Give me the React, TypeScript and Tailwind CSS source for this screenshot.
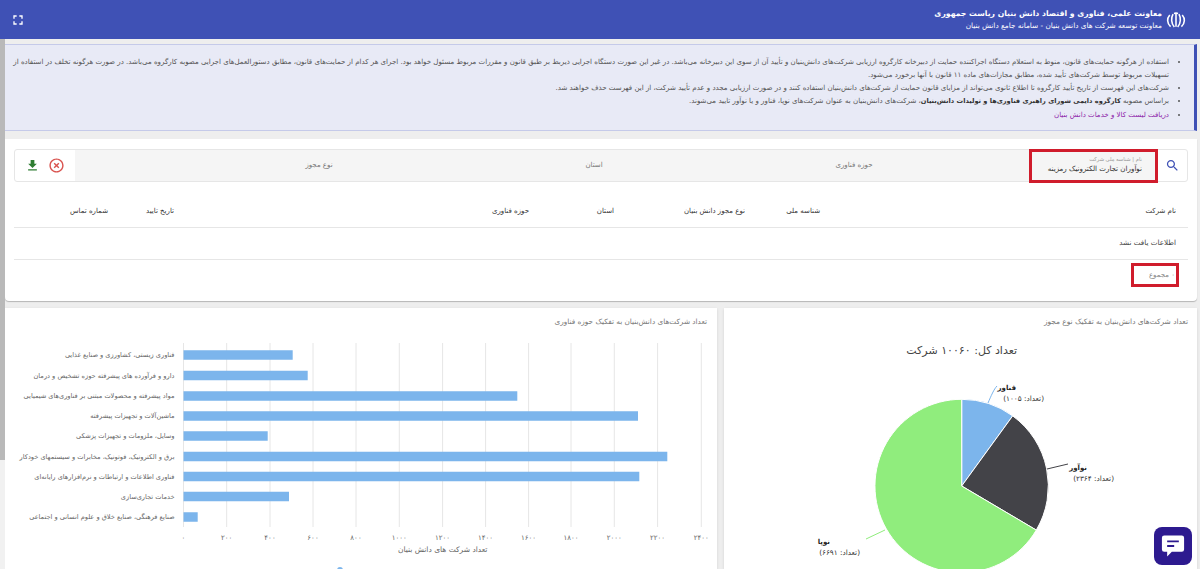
const bars = [
  { label: "فناوری زیستی، کشاورزی و صنایع غذایی", y: 355, end: 292.7 },
  { label: "دارو و فرآورده های پیشرفته حوزه تشخیص و درمان", y: 375.5, end: 307.7 },
  { label: "مواد پیشرفته و محصولات مبتنی بر فناوری‌های شیمیایی", y: 396, end: 517.3 },
  { label: "ماشین‌آلات و تجهیزات پیشرفته", y: 416, end: 638 },
  { label: "وسایل، ملزومات و تجهیزات پزشکی", y: 436, end: 267.7 },
  { label: "برق و الکترونیک، فوتونیک، مخابرات و سیستمهای خودکار", y: 456.5, end: 667.3 },
  { label: "فناوری اطلاعات و ارتباطات و نرم‌افزارهای رایانه‌ای", y: 476.5, end: 639.3 },
  { label: "خدمات تجاری‌سازی", y: 496.5, end: 289 },
  { label: "صنایع فرهنگی، صنایع خلاق و علوم انسانی و اجتماعی", y: 517, end: 197.7 },
];

const ticks = [
  { label: "۰", x: 183.5 },
  { label: "۲۰۰", x: 226.7 },
  { label: "۴۰۰", x: 270 },
  { label: "۶۰۰", x: 313 },
  { label: "۸۰۰", x: 356 },
  { label: "۱۰۰۰", x: 399.3 },
  { label: "۱۲۰۰", x: 442.6 },
  { label: "۱۴۰۰", x: 485.6 },
  { label: "۱۶۰۰", x: 528.6 },
  { label: "۱۸۰۰", x: 571 },
  { label: "۲۰۰۰", x: 614.3 },
  { label: "۲۲۰۰", x: 657.6 },
  { label: "۲۴۰۰", x: 701.3 },
];

const columns = ["نام شرکت", "شناسه ملی", "نوع مجوز دانش بنیان", "استان", "حوزه فناوری", "تاریخ تایید", "شماره تماس"];

function BarChart() {
  return (
    <svg viewBox="5 336 712 233" className="block h-[233px] w-[712px]" dir="rtl">
      {ticks.map((t) => (
        <g key={t.x}>
          <line x1={t.x} x2={t.x} y1={343} y2={527} stroke="#e6e6e6" strokeWidth={1} />
          <text x={t.x} y={539.5} textAnchor="middle" fontSize={7} fill="#666666">
            {t.label}
          </text>
        </g>
      ))}
      {bars.map((b) => (
        <g key={b.y}>
          <rect x={183.5} y={b.y - 4.75} width={b.end - 183.5} height={9.5} fill="#7cb5ec" />
          <text x={174.5} y={b.y + 2} textAnchor="start" fontSize={6.6} fill="#666666">
            {b.label}
          </text>
        </g>
      ))}
      <text x={442.7} y={552} textAnchor="middle" fontSize={7.5} fill="#666666">
        تعداد شرکت های دانش بنیان
      </text>
      <circle cx={340} cy={570} r={3} fill="#7cb5ec" />
    </svg>
  );
}

function PieChart() {
  return (
    <svg viewBox="724 336 473 233" className="block h-[233px] w-[473px]" dir="rtl">
      <text x={961.7} y={354} textAnchor="middle" fontSize={11} fill="#444444">
        تعداد کل: ۱۰۰۶۰ شرکت
      </text>
      <path d="M961.7 486 L961.7 399.3 A86.7 86.7 0 0 1 1012.7 415.9 Z" fill="#7cb5ec" stroke="#ffffff" />
      <path d="M961.7 486 L1012.7 415.9 A86.7 86.7 0 0 1 1036.3 530.1 Z" fill="#434348" stroke="#ffffff" />
      <path d="M961.7 486 L1036.3 530.1 A86.7 86.7 0 1 1 961.7 399.3 Z" fill="#90ed7d" stroke="#ffffff" />
      <path d="M988 403 C991 396 994 389 997 386" fill="none" stroke="#7cb5ec" />
      <path d="M1047 469 L1068 464" fill="none" stroke="#434348" />
      <path d="M885 530 L866 539" fill="none" stroke="#90ed7d" />
      <text x={1016} y={390} fontSize={7} fontWeight={700} fill="#222222">فناور</text>
      <text x={1044} y={400.5} fontSize={7.3} fill="#333333">(تعداد: ۱۰۰۵)</text>
      <text x={1087} y={470} fontSize={7} fontWeight={700} fill="#222222">نوآور</text>
      <text x={1114} y={480.5} fontSize={7.3} fill="#333333">(تعداد: ۲۳۶۴)</text>
      <text x={830} y={544} fontSize={7} fontWeight={700} fill="#222222">نوپا</text>
      <text x={860} y={554.5} fontSize={7.3} fill="#333333">(تعداد: ۶۶۹۱)</text>
    </svg>
  );
}

export default function App() {
  return (
    <div dir="rtl" className="relative h-[569px] w-[1200px] overflow-hidden bg-[#eeeeee] font-['DejaVu_Sans',sans-serif] text-[#444444]">
      {/* Header */}
      <header className="flex h-[39px] items-center justify-between bg-[#3f51b5] pl-[10px] pr-[14px] text-white">
        <div className="flex items-center gap-[4px]">
          <svg viewBox="0 0 24 24" className="h-[20px] w-[20px]" fill="none" stroke="#ffffff" strokeWidth={1.9}>
            <path d="M12 3 V20" />
            <path d="M9.5 4 H14.5" />
            <path d="M8.5 5 C6 9 6 16 10 20.5" />
            <path d="M15.5 5 C18 9 18 16 14 20.5" />
            <path d="M4.5 6 C1 10 1 16 5.5 20" />
            <path d="M19.5 6 C23 10 23 16 18.5 20" />
          </svg>
          <div>
            <div className="text-[7.7px] font-bold leading-[12px]">معاونت علمی، فناوری و اقتصاد دانش بنیان ریاست جمهوری</div>
            <div className="text-[7.3px] leading-[11px]">معاونت توسعه شرکت های دانش بنیان - سامانه جامع دانش بنیان</div>
          </div>
        </div>
        <svg viewBox="0 0 24 24" className="h-[16px] w-[16px]" fill="#ffffff">
          <path d="M7 14H5v5h5v-2H7v-3zm-2-4h2V7h3V5H5v5zm12 7h-3v2h5v-5h-2v3zM14 5v2h3v3h2V5h-5z" />
        </svg>
      </header>

      <div className="flex h-[530px]">
        <main className="w-[1195px] pr-[3px] pt-[5px]">
          {/* Notice */}
          <section className="h-[87px] border-y border-[#c5cae9] border-r-[3px] border-r-[#3f51b5] bg-[#e8eaf6] pl-[4px] pr-[14px] pt-[10px] text-[7.05px] leading-[13px] text-[#555555]">
            <ul className="list-disc pr-[11px]">
              <li>
                استفاده از هرگونه حمایت‌های قانون، منوط به استعلام دستگاه اجراکننده حمایت از دبیرخانه کارگروه ارزیابی شرکت‌های دانش‌بنیان و تأیید آن از سوی این دبیرخانه می‌باشد. در غیر این صورت دستگاه اجرایی ذیربط بر طبق قانون و مقررات مربوط مسئول خواهد بود. اجرای هر کدام از حمایت‌های قانون، مطابق دستورالعمل‌های اجرایی مصوبه کارگروه می‌باشد. در صورت هرگونه تخلف در استفاده از
                <br />
                تسهیلات مربوط توسط شرکت‌های تأیید شده، مطابق مجازات‌های ماده ۱۱ قانون با آنها برخورد می‌شود.
              </li>
              <li>
                شرکت‌های این فهرست از تاریخ تأیید کارگروه تا اطلاع ثانوی می‌تواند از مزایای قانون حمایت از شرکت‌های دانش‌بنیان استفاده کنند و در صورت ارزیابی مجدد و عدم تأیید شرکت، از این فهرست حذف خواهند شد.
              </li>
              <li>
                براساس مصوبه <b className="text-[6.6px] text-[#333333]">کارگروه دایمی شورای راهبری فناوری‌ها و تولیدات دانش‌بنیان</b>، شرکت‌های دانش‌بنیان به عنوان شرکت‌های نوپا، فناور و یا نوآور تایید می‌شوند.
              </li>
              <li>
                <a className="text-[#8e24aa]">دریافت لیست کالا و خدمات دانش بنیان</a>
              </li>
            </ul>
          </section>

          {/* Search and table */}
          <section className="mt-[8px] h-[162px] rounded-b-sm bg-white px-[9px] pt-[10px] shadow-[0_1px_1px_#b5b5b5]">
            <div className="flex h-[33px] items-stretch rounded-[3px] border border-[#e6e6e6]">
              <div className="flex w-[29px] items-center justify-center">
                <svg viewBox="0 0 24 24" className="h-[15px] w-[15px]" fill="#3f51b5">
                  <path d="M15.5 14h-.79l-.28-.27C15.41 12.59 16 11.11 16 9.5 16 5.91 13.09 3 9.5 3S3 5.91 3 9.5 5.91 16 9.5 16c1.61 0 3.09-.59 4.23-1.57l.27.28v.79l5 4.99L20.49 19l-4.99-5zm-6 0C7.01 14 5 11.99 5 9.5S7.01 5 9.5 5 14 7.01 14 9.5 11.99 14 9.5 14z" />
                </svg>
              </div>
              <div className="flex flex-1 items-center bg-[#f5f5f5] text-[7px] text-[#777777]">
                <div className="-my-[2px] h-[34px] w-[129px] border-[3px] border-[#d01c2c] pr-[13px] pt-[4px]">
                  <div className="text-[5.2px] leading-[7px] text-[#999999]">نام | شناسه ملی شرکت</div>
                  <div className="whitespace-nowrap text-[7.1px] leading-[12px] text-[#333333]">نوآوران تجارت الکترونیک رمزینه</div>
                </div>
                <div className="w-[350px] text-center">حوزه فناوری</div>
                <div className="w-[170px] text-center">استان</div>
                <div className="w-[380px] text-center">نوع مجوز</div>
              </div>
              <div className="flex w-[60px] items-center justify-center gap-[8px]">
                <svg viewBox="0 0 24 24" className="h-[17px] w-[17px]" fill="#d9534f">
                  <path d="M14.59 8L12 10.59 9.41 8 8 9.41 10.59 12 8 14.59 9.41 16 12 13.41 14.59 16 16 14.59 13.41 12 16 9.41 14.59 8zM12 2C6.47 2 2 6.47 2 12s4.47 10 10 10 10-4.47 10-10S17.53 2 12 2zm0 18c-4.41 0-8-3.59-8-8s3.59-8 8-8 8 3.59 8 8-3.59 8-8 8z" />
                </svg>
                <svg viewBox="0 0 24 24" className="h-[15px] w-[15px]" fill="#2e7d32">
                  <path d="M19 9h-4V3H9v6H5l7 7 7-7zM5 18v2h14v-2H5z" />
                </svg>
              </div>
            </div>

            <div className="mt-[13px] grid h-[33px] grid-cols-[356px_75px_131px_85px_355px_66px_1fr] items-center border-b border-[#e6e6e6] pr-[12px] text-[7px] text-[#333333]">
              {columns.map((c) => (
                <div key={c} className="whitespace-nowrap">{c}</div>
              ))}
            </div>
            <div className="flex h-[32px] items-center border-b border-[#e6e6e6] pr-[12px] text-[7.2px] text-[#444444]">
              اطلاعات یافت نشد
            </div>
            <div className="mr-[9px] mt-[3px] flex h-[24px] w-[48px] items-center border-[3px] border-[#d01c2c] pr-[1px] text-[7px] text-[#888888]">
              ۰ مجموع
            </div>
          </section>

          {/* Charts */}
          <div className="mt-[7px] flex gap-[7px]">
            <section className="w-[473px] bg-white shadow-sm">
              <h2 className="flex h-[28px] items-center pr-[9px] text-[7.4px] font-normal text-[#777777]">
                تعداد شرکت‌های دانش‌بنیان به تفکیک نوع مجوز
              </h2>
              <PieChart />
            </section>
            <section className="w-[712px] bg-white shadow-sm">
              <h2 className="flex h-[28px] items-center pr-[10px] text-[7.3px] font-normal text-[#777777]">
                تعداد شرکت‌های دانش‌بنیان به تفکیک حوزه فناوری
              </h2>
              <BarChart />
            </section>
          </div>
        </main>

        {/* Scrollbar */}
        <div className="w-[5px] bg-[#f1f1f1]">
          <div className="h-[421px] bg-[#b9b9b9]" />
        </div>
      </div>

      {/* Chat button */}
      <button className="absolute bottom-[4px] right-[8px] flex h-[38px] w-[38px] items-center justify-center rounded-[8px] bg-[#2d1a8f]">
        <svg viewBox="0 0 24 24" className="h-[28px] w-[28px]">
          <path d="M4.5 3 H19.5 A2 2 0 0 1 21.5 5 V15 A2 2 0 0 1 19.5 17 H11 L7 21 V17 H4.5 A2 2 0 0 1 2.5 15 V5 A2 2 0 0 1 4.5 3 Z" fill="#ffffff" />
          <path d="M7 8 H17 M7 12 H13" stroke="#2d1a8f" strokeWidth={1.6} />
        </svg>
      </button>
    </div>
  );
}
